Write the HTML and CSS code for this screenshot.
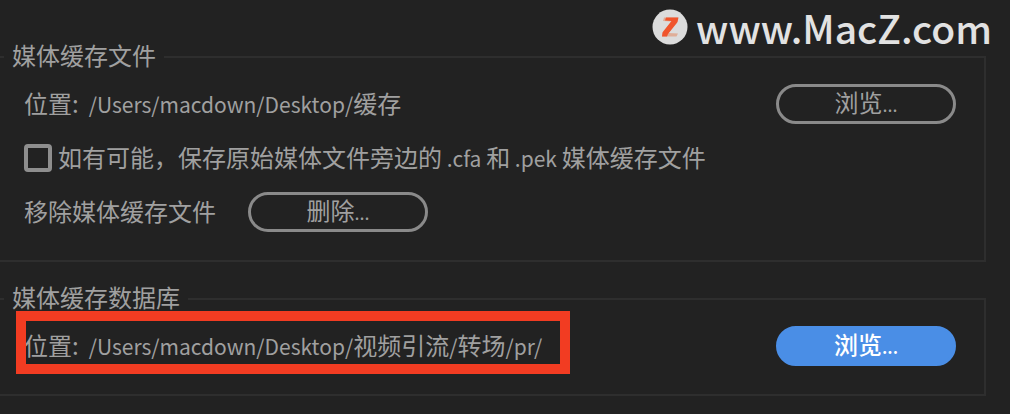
FILE: index.html
```html
<!DOCTYPE html>
<html lang="zh-CN">
<head>
<meta charset="utf-8">
<meta name="viewport" content="width=device-width, initial-scale=1">
<title>媒体缓存</title>
<link rel="stylesheet" href="styles.css">
</head>
<body>
<header class="brand">
  <svg class="brand-logo" viewBox="0 0 36 36" aria-hidden="true">
    <circle cx="18" cy="18" r="17.5" fill="#dcdcdc"/>
    <path d="M12 8.500H26L25 14L16.500 24L26 24.500L24.500 27.500H10L11 22.500L19.500 12.500L11 12Z" fill="#dfae98"/>
    <path d="M14 8.500H26.500L25.500 13L16 25L15 27.500H10L10.500 23.500L19.500 12L13 11.500Z" fill="#f0552d"/>
  </svg>
  <span class="brand-name">www.MacZ.com</span>
</header>
<main>
  <fieldset class="group">
    <legend class="group-title">媒体缓存文件</legend>
    <div class="row spread">
      <p class="location"><span>位置:</span><span><span class="latin">/Users/macdown/Desktop/</span>缓存</span></p>
      <button class="button" type="button">浏览<span class="dots">...</span></button>
    </div>
    <div class="row option">
      <input class="checkbox" type="checkbox" id="beside">
      <label class="text" for="beside">如有可能，保存原始媒体文件旁边的<span class="latin"> .cfa </span>和<span class="latin"> .pek </span>媒体缓存文件</label>
    </div>
    <div class="row remove">
      <span class="text">移除媒体缓存文件</span>
      <button class="button" type="button">删除<span class="dots">...</span></button>
    </div>
  </fieldset>
  <fieldset class="group">
    <legend class="group-title">媒体缓存数据库</legend>
    <div class="row spread">
      <p class="location marked"><span>位置:</span><span><span class="latin">/Users/macdown/Desktop/</span>视频引流<span class="latin">/</span>转场<span class="latin">/pr/</span></span></p>
      <button class="button primary" type="button">浏览<span class="dots">...</span></button>
    </div>
  </fieldset>
</main>
</body>
</html>
```
FILE: styles.css
```css
* {
  box-sizing: border-box;
}

body {
  margin: 0;
  background: #222222;
  color: #a0a0a0;
  font-family: "Noto Sans CJK SC", sans-serif;
  font-size: 24px;
  line-height: 24px;
}

.brand {
  display: flex;
  justify-content: flex-end;
  align-items: center;
  gap: 8px;
  padding: 10px 18px 0 0;
  height: 43px;
  color: #e2e2e2;
}

.brand-logo {
  width: 36px;
  height: 36px;
}

.brand-name {
  font-size: 39px;
  font-weight: 500;
  line-height: 36px;
}

.group {
  display: flex;
  flex-direction: column;
  gap: 20px;
  min-width: 0;
  margin: 0 24px 23px 0;
  padding: 13px 28px 28px 24px;
  border: 2px solid #2e2e2e;
  border-left: 0;
}

.group-title {
  margin-left: -20px;
  padding: 0 8px 4px;
}

.row {
  display: flex;
  align-items: center;
}

.spread {
  justify-content: space-between;
}

.option {
  gap: 6px;
}

.remove {
  gap: 32px;
}

.text,
.location {
  padding-bottom: 2px;
}

.location {
  position: relative;
  display: flex;
  gap: 10px;
  margin: 0;
}

.latin {
  font-size: 21px;
}

.dots {
  font-size: 18px;
}

.marked::after {
  content: "";
  position: absolute;
  inset: -22px -28px -14px -8px;
  border: 10px solid #f23c22;
  pointer-events: none;
}

.checkbox {
  appearance: none;
  width: 28px;
  height: 28px;
  margin: 0;
  border: 4px solid #8e8e8e;
  border-radius: 4px;
}

.checkbox:checked {
  background: #8e8e8e;
}

.button {
  width: 180px;
  height: 40px;
  padding: 0 0 2px;
  border: 3px solid #8a8a8a;
  border-radius: 20px;
  background: transparent;
  color: #a0a0a0;
  font: inherit;
}

.primary {
  border-color: #4a8ee6;
  background: #4a8ee6;
  color: #ffffff;
  font-weight: 500;
}
```
